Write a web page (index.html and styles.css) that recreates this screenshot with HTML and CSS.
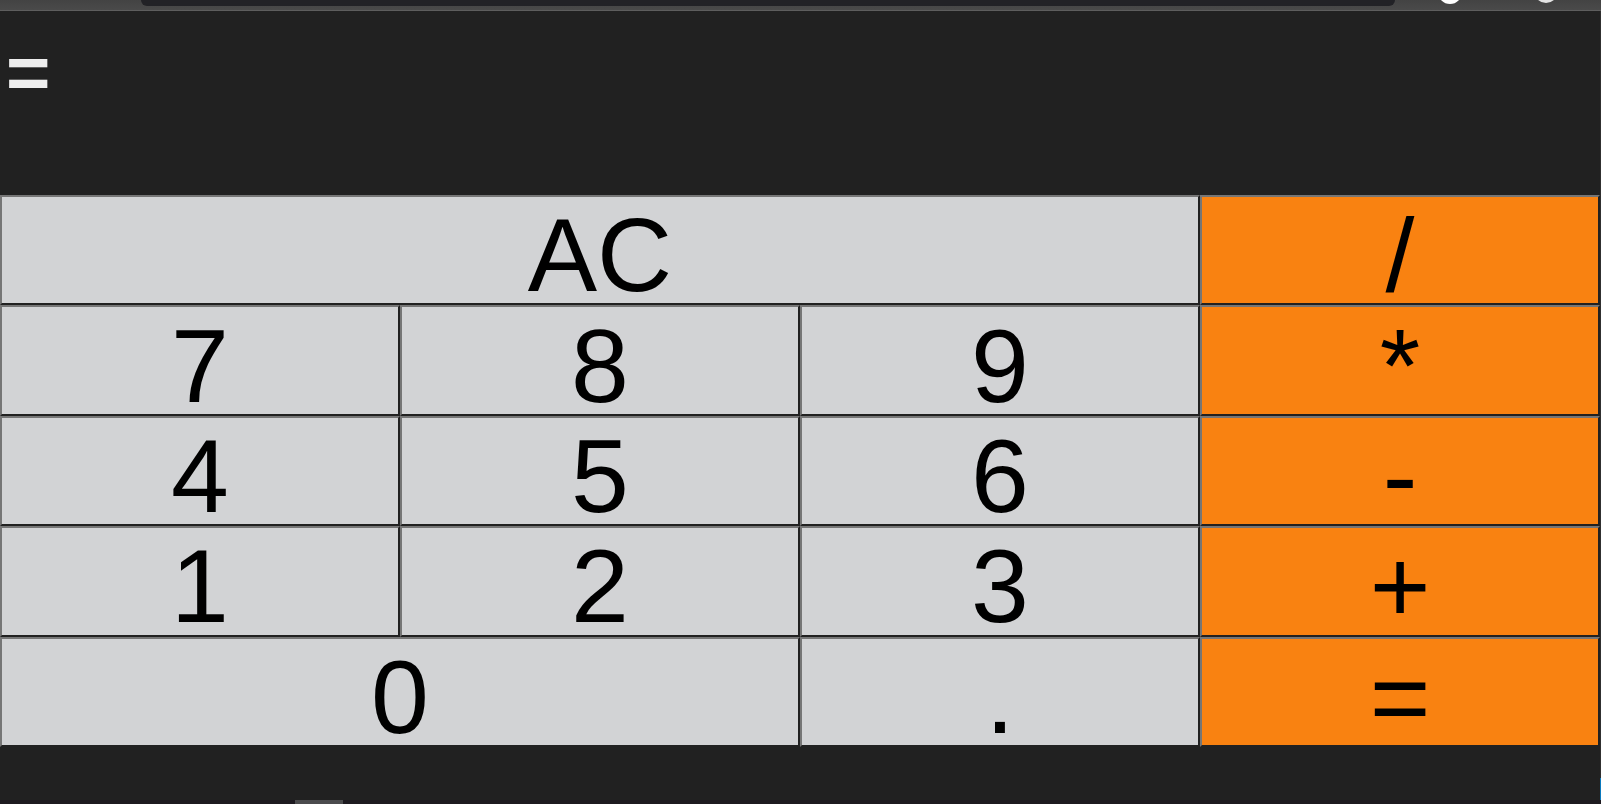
FILE: index.html
```
<!DOCTYPE html>
<html lang="en">
<head>
<meta charset="utf-8">
<title>Calculator</title>
<link rel="stylesheet" href="styles.css">
</head>
<body>
<div class="page">
  <header class="toolbar">
    <div class="address"></div>
    <svg class="tools" viewBox="0 0 206 10" aria-hidden="true">
      <circle cx="55" cy="-8" r="12" fill="#fff"/>
      <circle cx="151" cy="-9" r="12" fill="#e4e4e4"/>
    </svg>
  </header>
  <div class="window">
    <main class="calculator">
      <output class="display">=</output>
      <div class="keypad">
        <button type="button" class="key triple">AC</button>
        <button type="button" class="key operator">/</button>
        <button type="button" class="key">7</button>
        <button type="button" class="key">8</button>
        <button type="button" class="key">9</button>
        <button type="button" class="key operator">*</button>
        <button type="button" class="key">4</button>
        <button type="button" class="key">5</button>
        <button type="button" class="key">6</button>
        <button type="button" class="key operator">-</button>
        <button type="button" class="key">1</button>
        <button type="button" class="key">2</button>
        <button type="button" class="key">3</button>
        <button type="button" class="key operator">+</button>
        <button type="button" class="key double">0</button>
        <button type="button" class="key">.</button>
        <button type="button" class="key operator">=</button>
      </div>
    </main>
    <div class="edge"></div>
  </div>
  <footer class="taskbar"><div class="task"></div></footer>
</div>
</body>
</html>
```
FILE: styles.css
```
* {
  box-sizing: border-box;
}

body {
  margin: 0;
  background: #212121;
  font-family: "Liberation Sans", Arial, sans-serif;
}

.page {
  display: flex;
  flex-direction: column;
  height: 100vh;
  overflow: hidden;
}

.toolbar {
  display: flex;
  align-items: flex-start;
  padding-left: 141px;
  background: linear-gradient(#434343, #4a4a4a);
  border-bottom: 1px solid #5e5e5e;
}

.address {
  flex: 1;
  height: 6px;
  background: #222226;
  border-radius: 0 0 12px 12px;
}

.tools {
  display: block;
  width: 206px;
  height: 10px;
}

.window {
  display: flex;
  flex: 1;
  min-height: 0;
}

.calculator {
  display: flex;
  flex: 1;
  flex-direction: column;
  padding-bottom: 53px;
}

.display {
  height: 184px;
  padding: 16px 6px;
  color: #eee;
  font-size: 76px;
  font-weight: bold;
  line-height: 92px;
}

.keypad {
  display: grid;
  flex: 1;
  grid-template-columns: repeat(4, 1fr);
  grid-template-rows: repeat(5, 1fr);
  min-height: 0;
}

.key {
  min-height: 0;
  margin: 0;
  padding: 10px 0 0;
  background: #d2d3d5;
  border: 2px solid;
  border-color: #767676 #212121 #212121 #767676;
  border-radius: 0;
  color: #000;
  font-family: inherit;
  font-size: 104px;
  line-height: 96px;
}

.operator {
  background: #f98211;
}

.double {
  grid-column: span 2;
}

.triple {
  grid-column: span 3;
}

.edge {
  width: 1px;
  background: linear-gradient(#303030 calc(100% - 22px), #0b79bd 0);
}

.taskbar {
  height: 4px;
  padding-left: 295px;
  background: #1d1a20;
}

.task {
  width: 48px;
  height: 4px;
  background: #4b4b4d;
}
```
